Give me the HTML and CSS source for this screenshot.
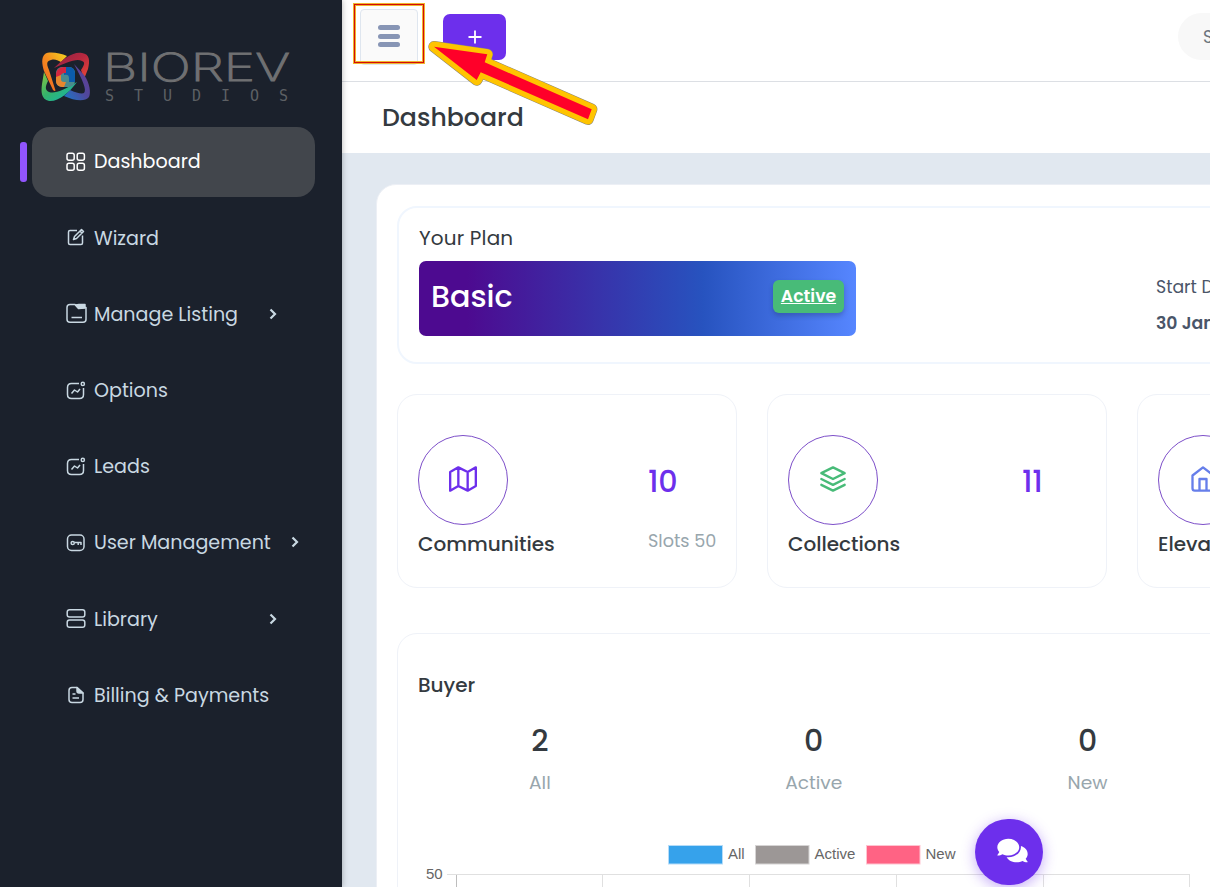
FILE: index.html
```html
<!DOCTYPE html>
<html lang="en">
<head>
<meta charset="utf-8">
<title>Dashboard</title>
<link rel="stylesheet" href="styles.css">
</head>
<body>
<div class="app">
  <aside class="sidebar">
    <svg class="logo" width="252" height="56" viewBox="0 0 252 56">
      <defs>
        <linearGradient id="g1" x1="0" y1="1" x2="1" y2="0"><stop offset="0" stop-color="#ee5a24"/><stop offset=".5" stop-color="#f58a1f"/><stop offset="1" stop-color="#f5d51f"/></linearGradient>
        <linearGradient id="g2" x1="0" y1="0" x2="1" y2="1"><stop offset="0" stop-color="#8c2346"/><stop offset=".5" stop-color="#b8283f"/><stop offset="1" stop-color="#ef4a36"/></linearGradient>
        <linearGradient id="g3" x1="1" y1="0" x2="0" y2="1"><stop offset="0" stop-color="#6a3b92"/><stop offset=".5" stop-color="#50479c"/><stop offset="1" stop-color="#1a78c8"/></linearGradient>
        <linearGradient id="g4" x1="0" y1="0" x2="1" y2="1"><stop offset="0" stop-color="#8bc63f"/><stop offset=".45" stop-color="#35b36b"/><stop offset="1" stop-color="#0db4b8"/></linearGradient>
      </defs>
      <path fill="url(#g1)" d="M27 6C20 3 9 1 5 4c-4 4-3 10-1 17l9 19c2 2 3 1 2-1L9 20C6 13 7 11 11 10c4-1 6 0 10 2z"/>
      <path fill="url(#g2)" d="M14 18C24 8 34 1 42 3c8 1 8 8 6 16l-4 10-3-9c4-6 4-8 1-9-6-3-16 2-28 7z"/>
      <path fill="url(#g3)" d="M34 14l10 11c6 8 7 18 5 22-4 5-14 4-25-1l6-6c6 3 12 4 14 3 3-3-1-12-10-29z"/>
      <path fill="url(#g4)" d="M4 22l4 9c-3 6-3 9 1 11 6 2 15-2 28-10-8 11-19 20-28 19C1 49 1 42 2 34z"/>
      <rect x="16" y="17" width="19" height="20" rx="6" fill="#4b8b8d"/>
      <path fill="#d42640" d="M16 25c0-5 3-8 8-8h6v6h-5c-3 0-5 2-5 5l-4 3z"/>
      <path fill="#0b5cab" d="M24 23h2v-6h3c4 0 6 3 6 7v8h-6v-4c0-3-2-4-5-3z"/>
      <path fill="#e8862e" d="M16 27l5-2v4c0 3 2 3 5 3l-2 5c-5 0-8-2-8-6z"/>
      <text class="logo-name" x="63" y="31" textLength="187" lengthAdjust="spacingAndGlyphs">BIOREV</text>
      <text class="logo-sub" x="65" y="51" textLength="183" lengthAdjust="spacing">STUDIOS</text>
    </svg>
    <nav class="nav">
      <a class="item active"><svg class="ico" width="22" height="22" viewBox="0 0 22 22"><rect x="2" y="2.300" width="7.2" height="7" rx="2"/><rect x="12.2" y="2.300" width="7.2" height="7" rx="2"/><rect x="2" y="12.300" width="7.2" height="7" rx="2"/><rect x="12.2" y="12.300" width="7.2" height="7" rx="2"/></svg><span>Dashboard</span></a>
      <a class="item"><svg class="ico" width="22" height="22" viewBox="0 0 22 22"><path d="M12 3.500H5Q3.500 3.500 3.500 5v11Q3.500 17.500 5 17.500h11q1.500 0 1.500-1.500V8.500"/><path d="M8.500 12.500l1-3 7-7 2 2-7 7zM15 4l2 2"/></svg><span>Wizard</span></a>
      <a class="item"><svg class="ico" width="22" height="22" viewBox="0 0 22 22"><path d="M5 1.500h5l3 3h8v11.700q0 3-3 3H5q-3 0-3-3V4.500q0-3 3-3zM6.500 14.500h10.500"/><path class="solid" d="M10.500 2L14 1.500h6V5l-6.500.500z"/></svg><span>Manage Listing</span><svg class="chev chev-listing" width="10" height="14" viewBox="0 0 10 14"><path d="M2.500 2.500L7 7l-4.500 4.500"/></svg></a>
      <a class="item"><svg class="ico" width="22" height="22" viewBox="0 0 22 22"><path d="M14 3.500H6.500q-4 0-4 4V14.500q0 4 4 4H14.500q4 0 4-4V8M6.500 13.500l3-3.500 3 2 2.500-3"/><circle cx="17.800" cy="3.900" r="1.600"/></svg><span>Options</span></a>
      <a class="item"><svg class="ico" width="22" height="22" viewBox="0 0 22 22"><path d="M14 3.500H6.500q-4 0-4 4V14.500q0 4 4 4H14.500q4 0 4-4V8M6.500 13.500l3-3.500 3 2 2.500-3"/><circle cx="17.800" cy="3.900" r="1.600"/></svg><span>Leads</span></a>
      <a class="item"><svg class="ico" width="22" height="22" viewBox="0 0 22 22"><rect x="2.500" y="3" width="16.500" height="15.500" rx="4"/><circle cx="7.700" cy="11" r="1.600"/><path d="M9.500 10.500h6.500v2.500M13.200 11v2"/></svg><span>User Management</span><svg class="chev chev-user" width="10" height="14" viewBox="0 0 10 14"><path d="M2.500 2.500L7 7l-4.500 4.500"/></svg></a>
      <a class="item"><svg class="ico" width="22" height="22" viewBox="0 0 22 22"><rect x="2.200" y="1.700" width="17.600" height="7.300" rx="2.300"/><rect x="2.200" y="11.900" width="17.600" height="7.300" rx="2.300"/></svg><span>Library</span><svg class="chev chev-library" width="10" height="14" viewBox="0 0 10 14"><path d="M2.500 2.500L7 7l-4.500 4.500"/></svg></a>
      <a class="item"><svg class="ico" width="22" height="22" viewBox="0 0 22 22"><path d="M12 3.500H7q-3 0-3 3v9q0 3 3 3h8q3 0 3-3V9zM7.500 10h3M7.500 14h6.500"/><path class="solid" d="M12 3.500L18 9h-4q-2 0-2-2z"/></svg><span>Billing &amp; Payments</span></a>
    </nav>
  </aside>

  <main class="main">
    <header class="topbar">
      <button class="menu"><i></i><i></i><i></i></button>
      <button class="add"><svg width="14" height="14" viewBox="0 0 14 14"><path d="M7 .5v13M.5 7h13"/></svg></button>
      <div class="search">Search</div>
    </header>
    <div class="titlebar"><h1>Dashboard</h1></div>

    <div class="panel">
      <section class="plan">
        <div>
          <h2>Your Plan</h2>
          <div class="banner"><strong>Basic</strong><a class="badge">Active</a></div>
        </div>
        <div class="dates"><span>Start Date</span><b>30 January</b></div>
      </section>

      <section class="cards">
        <div class="card">
          <div class="card-main">
            <span class="circle"><svg class="violet" width="28" height="28" viewBox="0 0 24 24"><path d="M1 6v16l7-4 8 4 7-4V2l-7 4-8-4zM8 2v16M16 6v16"/></svg></span>
            <h3>Communities</h3>
          </div>
          <div class="count"><b>10</b><span>Slots 50</span></div>
        </div>
        <div class="card">
          <div class="card-main">
            <span class="circle"><svg class="green" width="28" height="28" viewBox="0 0 24 24"><path d="M12 2L2 7l10 5 10-5zM2 17l10 5 10-5M2 12l10 5 10-5"/></svg></span>
            <h3>Collections</h3>
          </div>
          <div class="count short"><b>11</b></div>
        </div>
        <div class="card">
          <div class="card-main">
            <span class="circle"><svg class="blue" width="28" height="28" viewBox="0 0 24 24"><path d="M3 9l9-7 9 7v11a2 2 0 0 1-2 2H5a2 2 0 0 1-2-2zM9 22V12h6v10"/></svg></span>
            <h3>Elevations</h3>
          </div>
        </div>
      </section>

      <section class="buyer">
        <h3>Buyer</h3>
        <div class="stats">
          <div><b>2</b><span>All</span></div>
          <div><b>0</b><span>Active</span></div>
          <div><b>0</b><span>New</span></div>
        </div>
        <svg class="chart" width="793" height="60" viewBox="418 840 793 60">
          <g stroke-width="1">
            <rect x="668.500" y="845.500" width="54" height="18.500" fill="#36a2eb" stroke="#b5dcf8"/>
            <rect x="755.500" y="845.500" width="53.500" height="18.500" fill="#9c9796" stroke="#d6d4d4"/>
            <rect x="866.500" y="845.500" width="53.500" height="18.500" fill="#ff6384" stroke="#ffc4d0"/>
          </g>
          <g class="chart-text">
            <text x="728" y="859">All</text><text x="814.500" y="859">Active</text><text x="925.500" y="859">New</text><text x="426" y="879">50</text>
          </g>
          <path d="M447 874.500h743M602.500 875v30M749.500 875v30M896.500 875v30M1043.500 875v30M1189.500 875v30" stroke="#e0e0e0"/>
          <path d="M456.500 875v30" stroke="#bdbdbd"/>
        </svg>
      </section>
    </div>
  </main>
</div>

<button class="chat"><svg width="31" height="27" viewBox="0 0 576 512"><path fill="#fff" d="M416 192c0-88.400-93.100-160-208-160S0 103.600 0 192c0 34.300 14.100 65.900 38 92-13.400 30.200-35.500 54.200-35.800 54.500-2.200 2.300-2.800 5.700-1.500 8.700S4.800 352 8 352c36.600 0 66.900-12.300 88.700-25 32.200 15.700 70.300 25 111.300 25 114.900 0 208-71.600 208-160zm122 220c23.900-26 38-57.700 38-92 0-66.900-53.500-124.200-129.300-148.100.9 6.600 1.300 13.300 1.300 20.100 0 105.900-107.700 192-240 192-10.800 0-21.300-.8-31.700-1.900C207.800 439.600 281.800 480 368 480c41 0 79.100-9.200 111.300-25 21.800 12.700 52.100 25 88.700 25 3.200 0 6.100-1.900 7.300-4.800 1.300-2.900.7-6.300-1.500-8.700-.3-.3-22.400-24.200-35.800-54.500z"/></svg></button>
<div class="highlight"></div>
<svg class="arrow" width="180" height="96" viewBox="424 35 180 96">
  <path d="M434 46.700L487.300 54.300 484.700 62.300 591.700 109.300 588 119.200 480.700 72.300 476.700 80z" fill="#ffc400" stroke="#8d8876" stroke-width="11.400" stroke-linejoin="round"/>
  <path d="M434 46.700L487.300 54.300 484.700 62.300 591.700 109.300 588 119.200 480.700 72.300 476.700 80z" fill="#ff0029" stroke="#ffc400" stroke-width="10.400" stroke-linejoin="round" paint-order="stroke"/>
</svg>
</body>
</html>
```
FILE: styles.css
```css
* { box-sizing: border-box; }
html, body { height: 100%; margin: 0; overflow: hidden; }
body { font-family: Poppins, Inter, sans-serif; color: #343a40; background: #e1e8f0; }
h1, h2, h3 { margin: 0; font-weight: 500; }
button { border: 0; padding: 0; font: inherit; }

.app { display: flex; height: 887px; overflow: hidden; }

.sidebar { width: 342px; flex: none; background: #1b212c; padding-top: 50px; box-shadow: 0 0 6px rgba(0, 0, 0, .3); z-index: 1; }
.logo { display: block; margin-left: 40px; height: 56px; overflow: visible; }
.logo-name { font: 200 38.5px Inter, sans-serif; fill: #6f7072; stroke: #6f7072; stroke-width: .9px; }
.logo-sub { font: 300 15px "DejaVu Sans Mono", monospace; fill: #5d6064; }

.nav { margin-top: 21px; padding: 0 27px 0 32px; display: flex; flex-direction: column; gap: 6.2px; }
.item { position: relative; height: 70px; display: flex; align-items: center; padding-left: 33px; color: #c9d8e2; font-size: 19.1px; line-height: 28px; white-space: nowrap; }
.item span { padding-top: 1px; }
.item.active { background: #42464c; border-radius: 18px; color: #fff; }
.item.active span { padding-top: 0; }
.item.active::before { content: ""; position: absolute; left: -12px; top: 15px; width: 7px; height: 40px; border-radius: 3px; background: #9155fd; }
.ico { flex: none; margin-right: 7px; fill: none; stroke: currentColor; stroke-width: 1.5; stroke-linejoin: round; }
.ico .solid { fill: currentColor; }
.chev { fill: none; stroke: currentColor; stroke-width: 2.2; margin-bottom: 1px; }
.chev-listing { margin-left: 30px; }
.chev-user { margin-left: 19px; }
.chev-library { margin-left: 110px; }

.main { flex: none; width: 1300px; }
.topbar { height: 82px; background: #fff; border-bottom: 1px solid #dcdfe4; display: flex; align-items: flex-start; }
.menu { margin: 9px 0 0 18px; width: 58px; height: 56px; border: 1px solid #dfe6ef; border-radius: 4px; background: #fafafa; display: flex; flex-direction: column; align-items: center; justify-content: center; gap: 3.5px; padding-bottom: 2px; }
.menu i { width: 22px; height: 5px; border-radius: 2.5px; background: #8795b5; }
.add { margin: 14px 0 0 25px; width: 63px; height: 46px; border-radius: 7px; background: #6d2fec; display: flex; align-items: center; justify-content: center; }
.add path { stroke: #fff; stroke-width: 1.8; }
.search { margin: 13px 0 0 672px; width: 300px; height: 47px; border-radius: 24px; background: #f8f8f8; padding-left: 25px; font-size: 17px; line-height: 49px; color: #6c757d; }
.titlebar { height: 71px; background: #fff; padding-left: 40px; }
.titlebar h1 { font-size: 25.2px; font-weight: 500; line-height: 71px; }

.panel { margin: 31px 0 0 34px; width: 1160px; height: 760px; padding: 21px 20px; background: #fff; border: 1px solid #eceff5; border-radius: 20px; }
.plan { height: 158px; border: 2px solid #f0f6fe; border-radius: 20px; padding: 15px 20px; display: flex; }
.plan h2 { font-size: 20px; font-weight: 400; line-height: 30px; letter-spacing: .15px; }
.banner { margin-top: 8px; width: 437px; height: 75px; border-radius: 7px; padding: 0 12px; display: flex; align-items: center; justify-content: space-between; color: #fff; background: linear-gradient(90deg, #4d0a90 0%, #4d0a90 11%, #2753bf 65%, #5686ff 100%); }
.banner strong { font-size: 30.2px; font-weight: 500; line-height: 70px; padding-bottom: 4px; }
.badge { width: 71px; height: 33px; border-radius: 6px; background: #48bb78; font-size: 17.3px; font-weight: 600; line-height: 33px; text-align: center; text-decoration: underline; box-shadow: 0 3px 5px rgba(30, 40, 90, .3); margin-bottom: 5px; }
.dates { margin: 50px 0 0 300px; display: flex; flex-direction: column; gap: 8px; font-size: 17.3px; line-height: 28px; color: #4a5568; white-space: nowrap; }
.dates b { font-weight: 600; }

.cards { display: flex; gap: 30px; margin-top: 30px; }
.card { width: 340px; height: 194px; border: 1px solid #eff2f8; border-radius: 20px; padding: 40px 20px; display: flex; justify-content: space-between; flex: none; }
.circle { width: 90px; height: 90px; border: 1px solid #7d4fc9; border-radius: 50%; display: flex; align-items: center; justify-content: center; padding-bottom: 3px; }
.circle svg { fill: none; stroke-width: 2; stroke-linejoin: round; stroke-linecap: round; }
.violet { stroke: #6d2fec; }
.green { stroke: #48bb78; }
.blue { stroke: #667eea; }
h3 { font-size: 20px; line-height: 28px; }
.card h3 { margin-top: 5px; }
.count { width: 68px; padding-top: 26px; display: flex; flex-direction: column; white-space: nowrap; }
.count b { font-size: 30.2px; font-weight: 500; line-height: 42px; color: #6d2fec; letter-spacing: -.2px; }
.count span { margin-top: 24px; font-size: 17.6px; line-height: 28px; color: #98a6ad; }
.count.short { width: 64px; }

.buyer { margin-top: 45px; height: 400px; border: 1px solid #eff2f8; border-radius: 20px; padding: 37px 0 0 20px; }
.stats { display: flex; margin: 20px 0 0 -15px; }
.stats div { width: 273.8px; display: flex; flex-direction: column; align-items: center; }
.stats b { font-size: 30px; line-height: 44px; font-weight: 500; }
.stats span { margin-top: 6px; font-size: 18.6px; line-height: 28px; color: #98a6ad; }
.chart { display: block; margin-top: 43px; fill: none; }
.chart-text { font: 15px "Liberation Sans", Arial, sans-serif; fill: #666; }

.chat { position: absolute; left: 975px; top: 819px; width: 68px; height: 66px; border-radius: 34px; background: #6d2fec; box-shadow: 0 3px 14px rgba(109, 47, 236, .4); display: flex; align-items: center; justify-content: center; padding-left: 7px; padding-bottom: 3px; }
.highlight { position: absolute; left: 354px; top: 4px; width: 70px; height: 59px; border: 1px solid #d40a0a; box-shadow: 0 0 0 1px #efb52b, inset 0 0 0 1px #efb52b; }
.arrow { position: absolute; left: 424px; top: 35px; }
```
